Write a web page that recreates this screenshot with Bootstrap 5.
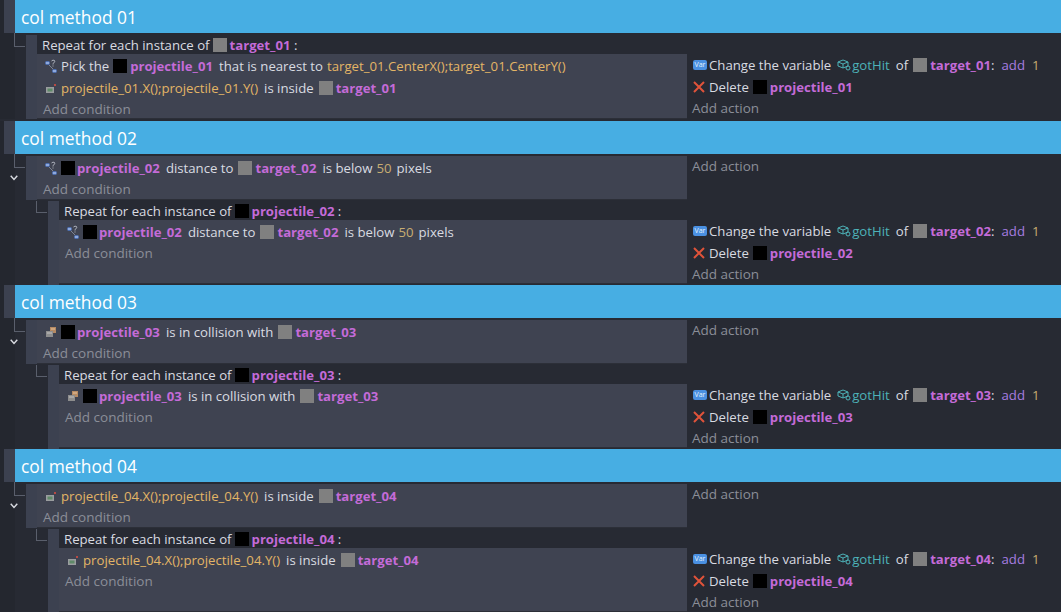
<!DOCTYPE html>
<html lang="en">
<head>
    <meta charset="UTF-8">
    <meta name="viewport" content="width=device-width, initial-scale=1.0">
    <title>Collision events</title>
    <link href="https://cdn.jsdelivr.net/npm/bootstrap@5.3.0/dist/css/bootstrap.min.css" rel="stylesheet">
    <style>
        body {
            background: #272a33;
            color: #d9dbe1;
            font-family: "Open Sans", "Liberation Sans", sans-serif;
            font-size: 13.2px;
            overflow: hidden;
        }
        .ev-first { margin-bottom: 2px; }
        .ev-gutter { width: 15px; background: #24272f; flex: none; position: relative; }
        .ev-cap { width: 11px; height: 33px; margin-left: 4px; background: #3c4150; }
        .ev-head { height: 33px; background: #47aee3; color: #fff; font-size: 17.4px; line-height: 35px; padding-left: 6px; }
        .tree-block { position: relative; padding-left: 11px; display: flex; margin-top: 2px; }
        .tree-block::before { content: ""; position: absolute; left: -1px; top: -2px; width: 11px; height: 14px; border-left: 1px solid #5a5f6c; border-bottom: 1px solid #5a5f6c; }
        .tree-sub { padding-left: 33px; margin-top: 1px; }
        .tree-sub::before { left: 21px; top: 0; height: 12px; }
        .tree-bar { width: 11px; background: #3c4150; flex: none; }
        .tree-main { flex-grow: 1; min-width: 0; }
        .rep-row { height: 19px; line-height: 20px; padding-left: 5px; white-space: nowrap; display: flex; align-items: center; }
        .rep-row .sq { margin-left: 3px; }
        .pair-row { display: flex; }
        .cond-panel { background: #3f4351; flex: none; border-bottom: 1px solid #2c2f38; padding-left: 6px; padding-top: 1px; }
        .panel-outer { width: 650px; height: 65px; }
        .panel-inner { width: 628px; height: 64px; }
        .panel-short { width: 650px; height: 44px; }
        .act-panel { padding-left: 5px; }
        .ln { height: 22px; line-height: 22px; white-space: nowrap; display: flex; align-items: center; }
        .ln-add { height: 21px; line-height: 21px; color: #8b8e98; font-size: 13.5px; }
        .nm { color: #c46bd8; font-weight: 700; font-size: 13.15px; }
        .ex { color: #e3b566; }
        .var-name { color: #4db2b8; }
        .op { color: #a67de0; margin-left: 7px; }
        .nb { color: #c8ad72; }
        .nb-gap { margin-left: 7px; }
        .sq { display: inline-block; width: 14px; height: 14px; flex: none; margin: 0 3px 0 4px; }
        .sq-g { background: #808080; }
        .sq-k { background: #000; }
        .ic { width: 14px; height: 14px; flex: none; margin-left: 0; margin-right: 2px; }
        .ic-cond { margin-left: 2px; }
        .ic-cond + .sq { margin-left: 0; margin-right: 2px; }
        .ic-del { margin-right: 3px; }
        .sp { margin-left: 6px; margin-right: 1px; }
        .sp-ex { margin-left: 3px; }
        .sp-tight { margin-left: 3px; }
        .sp-unit { margin-left: 5px; }
        .var-tag { width: 14px; height: 10px; flex: none; background: #4a90e2; color: #e4f0fc; border-radius: 2px; font-size: 7px; line-height: 10px; text-align: center; margin-right: 2px; margin-left: 1px; }
        .chev { position: absolute; left: 10px; top: 54px; width: 8px; height: 6px; }
    </style>
</head>
<body>
<svg width="0" height="0" class="position-absolute">
    <symbol id="i-dist" viewBox="0 0 14 14">
        <rect x="0.500" y="2.500" width="4" height="3" rx="1" fill="#8fa9dc" stroke="#4a6db0"/>
        <rect x="7.500" y="10.500" width="4" height="3" rx="1" fill="#8fa9dc" stroke="#4a6db0"/>
        <path d="M4 6l4 4" stroke="#7d8494" stroke-width="1"/>
        <path d="M6.500 2q1.500-1.500 3-.5t-1.500 3v1" stroke="#aeb2bc" stroke-width="1" fill="none"/>
        <rect x="7.500" y="6.500" width="1" height="1" fill="#aeb2bc"/>
    </symbol>
    <symbol id="i-pos" viewBox="0 0 14 14">
        <rect x="1" y="6" width="8" height="6" fill="#9a9d9f"/>
        <rect x="2.500" y="7.500" width="5" height="3" fill="#5f8a68"/>
        <rect x="9" y="3" width="2" height="2" fill="#b84a44"/>
    </symbol>
    <symbol id="i-col" viewBox="0 0 14 14">
        <rect x="5" y="2" width="6" height="6" fill="#b58a63"/>
        <rect x="6" y="3" width="4" height="2" fill="#d0a77f"/>
        <rect x="1" y="6" width="7" height="6" fill="#8d8d8d"/>
        <rect x="2" y="7" width="5" height="2" fill="#a8a8a8"/>
    </symbol>
    <symbol id="i-del" viewBox="0 0 14 14">
        <path d="M2 2l10 10M12 2L2 12" stroke="#e0533a" stroke-width="2"/>
    </symbol>
    <symbol id="i-cube" viewBox="0 0 14 14">
        <path d="M6 2l5 2v4l-5 2-5-2V4zM1 4l5 2 5-2M6 6v4" stroke="#4db2b8" stroke-width="1" fill="none"/>
        <circle cx="11" cy="10" r="2" stroke="#4db2b8" fill="none"/>
    </symbol>
</svg>

<!-- col method 01 -->
<div class="d-flex ev-first">
    <div class="ev-gutter"><div class="ev-cap"></div></div>
    <div class="flex-grow-1">
        <div class="ev-head">col method 01</div>
        <div class="tree-block">
            <div class="tree-bar"></div>
            <div class="tree-main">
                <div class="rep-row">Repeat for each instance of<span class="sq sq-g"></span><span class="nm">target_01</span>&nbsp;:</div>
                <div class="pair-row">
                    <div class="cond-panel panel-outer">
                        <div class="ln"><svg class="ic ic-cond"><use href="#i-dist"/></svg><span>Pick the</span><span class="sq sq-k"></span><span class="nm">projectile_01</span><span class="sp">that is nearest to</span><span class="ex sp-ex">target_01.CenterX();target_01.CenterY()</span></div>
                        <div class="ln"><svg class="ic ic-cond"><use href="#i-pos"/></svg><span class="ex">projectile_01.X();projectile_01.Y()</span><span class="sp">is inside</span><span class="sq sq-g"></span><span class="nm">target_01</span></div>
                        <div class="ln ln-add">Add condition</div>
                    </div>
                    <div class="act-panel">
                        <div class="ln"><span class="var-tag">Var</span>Change the variable<svg class="ic sp"><use href="#i-cube"/></svg><span class="var-name">gotHit</span><span class="sp">of</span><span class="sq sq-g"></span><span class="nm">target_01</span>:<span class="op">add</span><span class="nb nb-gap">1</span></div>
                        <div class="ln"><svg class="ic ic-del"><use href="#i-del"/></svg><span>Delete</span><span class="sq sq-k"></span><span class="nm">projectile_01</span></div>
                        <div class="ln ln-add">Add action</div>
                    </div>
                </div>
            </div>
        </div>
    </div>
</div>

<!-- col method 02 -->
<div class="d-flex">
    <div class="ev-gutter"><div class="ev-cap"></div><svg class="chev" viewBox="0 0 11 8"><path d="M1 1l4.500 5L10 1" stroke="#d9dbe1" stroke-width="2" fill="none"/></svg></div>
    <div class="flex-grow-1">
        <div class="ev-head">col method 02</div>
        <div class="tree-block">
            <div class="tree-bar"></div>
            <div class="tree-main">
                <div class="pair-row">
                    <div class="cond-panel panel-short">
                        <div class="ln"><svg class="ic ic-cond"><use href="#i-dist"/></svg><span class="sq sq-k"></span><span class="nm">projectile_02</span><span class="sp">distance to</span><span class="sq sq-g"></span><span class="nm">target_02</span><span class="sp">is below</span><span class="nb sp-tight">50</span><span class="sp-unit">pixels</span></div>
                        <div class="ln ln-add">Add condition</div>
                    </div>
                    <div class="act-panel"><div class="ln ln-add">Add action</div></div>
                </div>
            </div>
        </div>
        <div class="tree-block tree-sub">
            <div class="tree-bar"></div>
            <div class="tree-main">
                <div class="rep-row">Repeat for each instance of<span class="sq sq-k"></span><span class="nm">projectile_02</span>&nbsp;:</div>
                <div class="pair-row">
                    <div class="cond-panel panel-inner">
                        <div class="ln"><svg class="ic ic-cond"><use href="#i-dist"/></svg><span class="sq sq-k"></span><span class="nm">projectile_02</span><span class="sp">distance to</span><span class="sq sq-g"></span><span class="nm">target_02</span><span class="sp">is below</span><span class="nb sp-tight">50</span><span class="sp-unit">pixels</span></div>
                        <div class="ln ln-add">Add condition</div>
                    </div>
                    <div class="act-panel">
                        <div class="ln"><span class="var-tag">Var</span>Change the variable<svg class="ic sp"><use href="#i-cube"/></svg><span class="var-name">gotHit</span><span class="sp">of</span><span class="sq sq-g"></span><span class="nm">target_02</span>:<span class="op">add</span><span class="nb nb-gap">1</span></div>
                        <div class="ln"><svg class="ic ic-del"><use href="#i-del"/></svg><span>Delete</span><span class="sq sq-k"></span><span class="nm">projectile_02</span></div>
                        <div class="ln ln-add">Add action</div>
                    </div>
                </div>
            </div>
        </div>
    </div>
</div>

<!-- col method 03 -->
<div class="d-flex">
    <div class="ev-gutter"><div class="ev-cap"></div><svg class="chev" viewBox="0 0 11 8"><path d="M1 1l4.500 5L10 1" stroke="#d9dbe1" stroke-width="2" fill="none"/></svg></div>
    <div class="flex-grow-1">
        <div class="ev-head">col method 03</div>
        <div class="tree-block">
            <div class="tree-bar"></div>
            <div class="tree-main">
                <div class="pair-row">
                    <div class="cond-panel panel-short">
                        <div class="ln"><svg class="ic ic-cond"><use href="#i-col"/></svg><span class="sq sq-k"></span><span class="nm">projectile_03</span><span class="sp">is in collision with</span><span class="sq sq-g"></span><span class="nm">target_03</span></div>
                        <div class="ln ln-add">Add condition</div>
                    </div>
                    <div class="act-panel"><div class="ln ln-add">Add action</div></div>
                </div>
            </div>
        </div>
        <div class="tree-block tree-sub">
            <div class="tree-bar"></div>
            <div class="tree-main">
                <div class="rep-row">Repeat for each instance of<span class="sq sq-k"></span><span class="nm">projectile_03</span>&nbsp;:</div>
                <div class="pair-row">
                    <div class="cond-panel panel-inner">
                        <div class="ln"><svg class="ic ic-cond"><use href="#i-col"/></svg><span class="sq sq-k"></span><span class="nm">projectile_03</span><span class="sp">is in collision with</span><span class="sq sq-g"></span><span class="nm">target_03</span></div>
                        <div class="ln ln-add">Add condition</div>
                    </div>
                    <div class="act-panel">
                        <div class="ln"><span class="var-tag">Var</span>Change the variable<svg class="ic sp"><use href="#i-cube"/></svg><span class="var-name">gotHit</span><span class="sp">of</span><span class="sq sq-g"></span><span class="nm">target_03</span>:<span class="op">add</span><span class="nb nb-gap">1</span></div>
                        <div class="ln"><svg class="ic ic-del"><use href="#i-del"/></svg><span>Delete</span><span class="sq sq-k"></span><span class="nm">projectile_03</span></div>
                        <div class="ln ln-add">Add action</div>
                    </div>
                </div>
            </div>
        </div>
    </div>
</div>

<!-- col method 04 -->
<div class="d-flex">
    <div class="ev-gutter"><div class="ev-cap"></div><svg class="chev" viewBox="0 0 11 8"><path d="M1 1l4.500 5L10 1" stroke="#d9dbe1" stroke-width="2" fill="none"/></svg></div>
    <div class="flex-grow-1">
        <div class="ev-head">col method 04</div>
        <div class="tree-block">
            <div class="tree-bar"></div>
            <div class="tree-main">
                <div class="pair-row">
                    <div class="cond-panel panel-short">
                        <div class="ln"><svg class="ic ic-cond"><use href="#i-pos"/></svg><span class="ex">projectile_04.X();projectile_04.Y()</span><span class="sp">is inside</span><span class="sq sq-g"></span><span class="nm">target_04</span></div>
                        <div class="ln ln-add">Add condition</div>
                    </div>
                    <div class="act-panel"><div class="ln ln-add">Add action</div></div>
                </div>
            </div>
        </div>
        <div class="tree-block tree-sub">
            <div class="tree-bar"></div>
            <div class="tree-main">
                <div class="rep-row">Repeat for each instance of<span class="sq sq-k"></span><span class="nm">projectile_04</span>&nbsp;:</div>
                <div class="pair-row">
                    <div class="cond-panel panel-inner">
                        <div class="ln"><svg class="ic ic-cond"><use href="#i-pos"/></svg><span class="ex">projectile_04.X();projectile_04.Y()</span><span class="sp">is inside</span><span class="sq sq-g"></span><span class="nm">target_04</span></div>
                        <div class="ln ln-add">Add condition</div>
                    </div>
                    <div class="act-panel">
                        <div class="ln"><span class="var-tag">Var</span>Change the variable<svg class="ic sp"><use href="#i-cube"/></svg><span class="var-name">gotHit</span><span class="sp">of</span><span class="sq sq-g"></span><span class="nm">target_04</span>:<span class="op">add</span><span class="nb nb-gap">1</span></div>
                        <div class="ln"><svg class="ic ic-del"><use href="#i-del"/></svg><span>Delete</span><span class="sq sq-k"></span><span class="nm">projectile_04</span></div>
                        <div class="ln ln-add">Add action</div>
                    </div>
                </div>
            </div>
        </div>
    </div>
</div>
</body>
</html>
